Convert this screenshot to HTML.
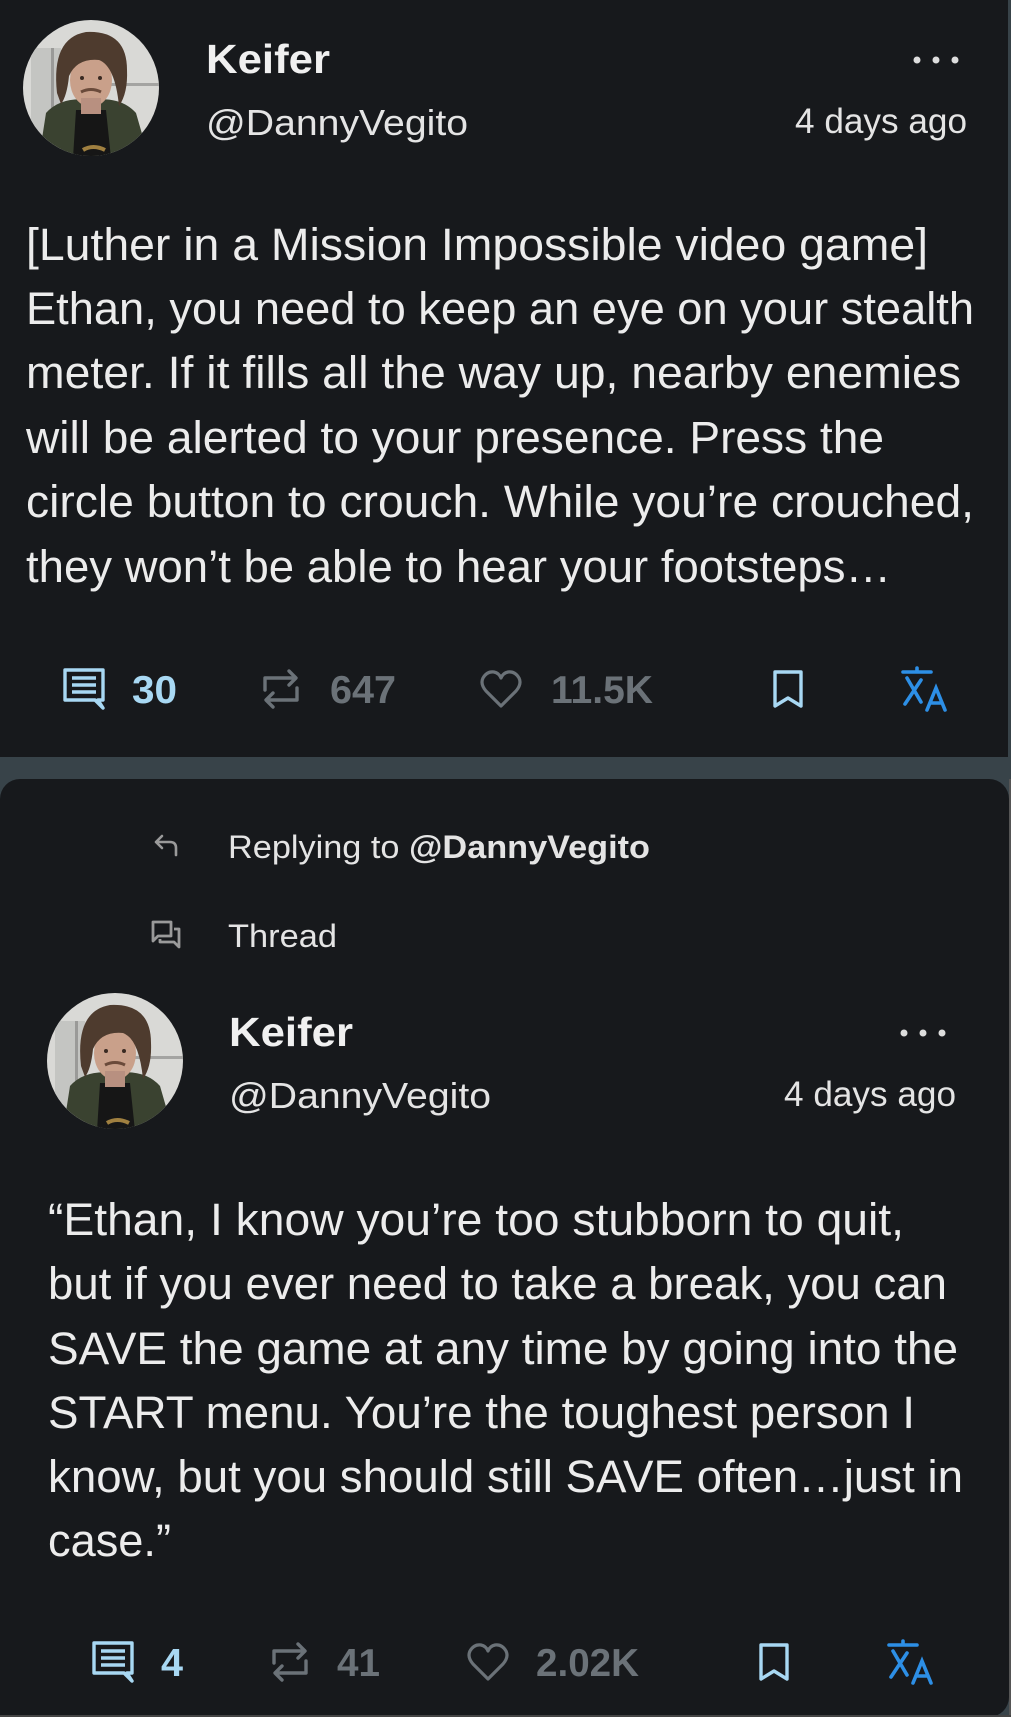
<!DOCTYPE html>
<html><head><meta charset="utf-8"><style>
html,body{margin:0;padding:0;background:#384349;}
svg{display:block}
text{font-family:"Liberation Sans",Arial,sans-serif;}
</style></head><body>
<svg width="1011" height="1717" viewBox="0 0 1011 1717" xmlns="http://www.w3.org/2000/svg">
<defs>
<clipPath id="c1"><circle cx="91" cy="88" r="68"/></clipPath>
<clipPath id="c2"><circle cx="115" cy="1061" r="68"/></clipPath>
<g id="av">
<rect x="-70" y="-70" width="140" height="140" fill="#d9d9d6"/>
<rect x="-60" y="-40" width="30" height="110" fill="#c4c5c2"/>
<rect x="-40" y="-40" width="3" height="80" fill="#9a9a98"/>
<rect x="20" y="-5" width="50" height="3" fill="#a4a4a2"/>
<path d="M-52 70 L-45 25 Q-30 8 0 12 Q30 8 45 25 L58 70 Z" fill="#3a4230"/>
<path d="M-18 70 L-15 22 L15 22 L20 70 Z" fill="#161616"/>
<path d="M-8 62 Q2 56 14 62" stroke="#a08040" stroke-width="4" fill="none"/>
<ellipse cx="0" cy="-8" rx="21" ry="27" fill="#c9a08a"/>
<rect x="-10" y="10" width="20" height="16" fill="#b89080"/>
<path d="M-34 5 Q-40 -50 -5 -56 Q36 -58 36 -18 Q37 5 28 18 Q24 -22 8 -28 Q-14 -30 -22 -12 Q-24 8 -30 16 Z" fill="#4e3b2e"/>
<path d="M-10 4 Q0 -1 10 4" stroke="#6a4a3a" stroke-width="3" fill="none"/>
<circle cx="-9" cy="-10" r="2" fill="#3a2a22"/><circle cx="9" cy="-10" r="2" fill="#3a2a22"/>
</g>
<g id="cm"><path d="M2 2 H40 V32 H35 L40 40 L32 32 H2 Z" fill="none" stroke-width="3.4" stroke-linejoin="round"/><path d="M9 10 H33 M9 17 H33 M9 24 H33" stroke-width="3.4"/></g>
<g id="rt" fill="none" stroke-width="3.4" stroke-linecap="round" stroke-linejoin="round"><path d="M2 22 V10 H32 M26 3 L33 10 L26 17"/><path d="M34 20 V32 H4 M10 25 L3 32 L10 39"/></g>
<g id="ht"><path d="M21 37 L6 22 Q0 15 3 9 Q7 2 14 3 Q19 4 21 9 Q23 4 28 3 Q35 2 39 9 Q42 15 36 22 Z" fill="none" stroke-width="3.2" stroke-linejoin="round"/></g>
<g id="bm"><path d="M2 2 H28 V36 L15 28 L2 36 Z" fill="none" stroke-width="3.4" stroke-linejoin="round"/></g>
<g id="tr" fill="none" stroke-width="3.6" stroke-linecap="round"><path d="M2 4 H30 M16 0 V4 M6 10 L20 34 M20 12 L4 36"/><path d="M26 42 L35 20 L44 42 M29 35 H41"/></g>
</defs>

<rect x="0" y="0" width="1008" height="757" fill="#17191c"/>
<rect x="0" y="779" width="1009" height="938" rx="20" fill="#17191c"/>
<rect x="0" y="800" width="30" height="917" fill="#17191c"/>
<rect x="1009" y="779" width="2" height="938" fill="#555"/>

<g clip-path="url(#c1)"><use href="#av" transform="translate(91,88)"/></g>
<text x="206" y="73" font-size="41" font-weight="bold" fill="#f0f0f0" textLength="124" lengthAdjust="spacingAndGlyphs">Keifer</text>
<text x="206" y="135" font-size="36" fill="#e4e4e4" textLength="262" lengthAdjust="spacingAndGlyphs">@DannyVegito</text>
<text x="795" y="133" font-size="35" fill="#e4e4e4" textLength="172" lengthAdjust="spacingAndGlyphs">4 days ago</text>
<circle cx="917" cy="60" r="3.5" fill="#ddd"/><circle cx="936" cy="60" r="3.5" fill="#ddd"/><circle cx="955" cy="60" r="3.5" fill="#ddd"/>

<g font-size="45" fill="#ececec">
<text x="26" y="260" textLength="902" lengthAdjust="spacingAndGlyphs">[Luther in a Mission Impossible video game]</text>
<text x="26" y="324" textLength="948" lengthAdjust="spacingAndGlyphs">Ethan, you need to keep an eye on your stealth</text>
<text x="26" y="388" textLength="935" lengthAdjust="spacingAndGlyphs">meter. If it fills all the way up, nearby enemies</text>
<text x="26" y="453" textLength="858" lengthAdjust="spacingAndGlyphs">will be alerted to your presence. Press the</text>
<text x="26" y="517" textLength="948" lengthAdjust="spacingAndGlyphs">circle button to crouch. While you’re crouched,</text>
<text x="26" y="582" textLength="865" lengthAdjust="spacingAndGlyphs">they won’t be able to hear your footsteps…</text>
</g>

<use href="#cm" transform="translate(63,668)" stroke="#a8d8f3"/>
<text x="132" y="703" font-size="39" font-weight="bold" fill="#a8d8f3" textLength="45" lengthAdjust="spacingAndGlyphs">30</text>
<use href="#rt" transform="translate(263,668)" stroke="#6b7278"/>
<text x="330" y="703" font-size="39" font-weight="bold" fill="#6b7278" textLength="66" lengthAdjust="spacingAndGlyphs">647</text>
<use href="#ht" transform="translate(480,669)" stroke="#6b7278"/>
<text x="551" y="703" font-size="39" font-weight="bold" fill="#6b7278" textLength="102" lengthAdjust="spacingAndGlyphs">11.5K</text>
<use href="#bm" transform="translate(773,670)" stroke="#a8d8f3"/>
<use href="#tr" transform="translate(901,668)" stroke="#2d8fe6"/>

<path d="M176 855 V848 Q176 842 170 842 H156 M162 836 L156 842 L162 848" fill="none" stroke="#9a9a9a" stroke-width="2.6" stroke-linecap="round" stroke-linejoin="round"/>
<text x="228" y="858" font-size="32" fill="#e4e4e4" textLength="422" lengthAdjust="spacingAndGlyphs">Replying to <tspan font-weight="bold">@DannyVegito</tspan></text>
<path d="M153 922 H171 V936 H158 L153 941 Z M174 929 H179 V947 L174 942 H160 V939" fill="none" stroke="#9a9a9a" stroke-width="2.8" stroke-linejoin="round"/>
<text x="228" y="947" font-size="32" fill="#e4e4e4" textLength="109" lengthAdjust="spacingAndGlyphs">Thread</text>

<g clip-path="url(#c2)"><use href="#av" transform="translate(115,1061)"/></g>
<text x="229" y="1046" font-size="41" font-weight="bold" fill="#f0f0f0" textLength="124" lengthAdjust="spacingAndGlyphs">Keifer</text>
<text x="229" y="1108" font-size="36" fill="#e4e4e4" textLength="262" lengthAdjust="spacingAndGlyphs">@DannyVegito</text>
<text x="784" y="1106" font-size="35" fill="#e4e4e4" textLength="172" lengthAdjust="spacingAndGlyphs">4 days ago</text>
<circle cx="904" cy="1033" r="3.5" fill="#ddd"/><circle cx="923" cy="1033" r="3.5" fill="#ddd"/><circle cx="942" cy="1033" r="3.5" fill="#ddd"/>

<g font-size="45" fill="#ececec">
<text x="48" y="1235" textLength="856" lengthAdjust="spacingAndGlyphs">“Ethan, I know you’re too stubborn to quit,</text>
<text x="48" y="1299" textLength="899" lengthAdjust="spacingAndGlyphs">but if you ever need to take a break, you can</text>
<text x="48" y="1364" textLength="910" lengthAdjust="spacingAndGlyphs">SAVE the game at any time by going into the</text>
<text x="48" y="1428" textLength="867" lengthAdjust="spacingAndGlyphs">START menu. You’re the toughest person I</text>
<text x="48" y="1492" textLength="915" lengthAdjust="spacingAndGlyphs">know, but you should still SAVE often…just in</text>
<text x="48" y="1556" textLength="123" lengthAdjust="spacingAndGlyphs">case.”</text>
</g>

<use href="#cm" transform="translate(92,1641)" stroke="#a8d8f3"/>
<text x="161" y="1676" font-size="39" font-weight="bold" fill="#a8d8f3" textLength="22" lengthAdjust="spacingAndGlyphs">4</text>
<use href="#rt" transform="translate(272,1641)" stroke="#6b7278"/>
<text x="337" y="1676" font-size="39" font-weight="bold" fill="#6b7278" textLength="43" lengthAdjust="spacingAndGlyphs">41</text>
<use href="#ht" transform="translate(467,1642)" stroke="#6b7278"/>
<text x="536" y="1676" font-size="39" font-weight="bold" fill="#6b7278" textLength="103" lengthAdjust="spacingAndGlyphs">2.02K</text>
<use href="#bm" transform="translate(759,1643)" stroke="#a8d8f3"/>
<use href="#tr" transform="translate(887,1641)" stroke="#2d8fe6"/>
<rect x="0" y="1715" width="1011" height="2" fill="#444"/>
</svg>
</body></html>
